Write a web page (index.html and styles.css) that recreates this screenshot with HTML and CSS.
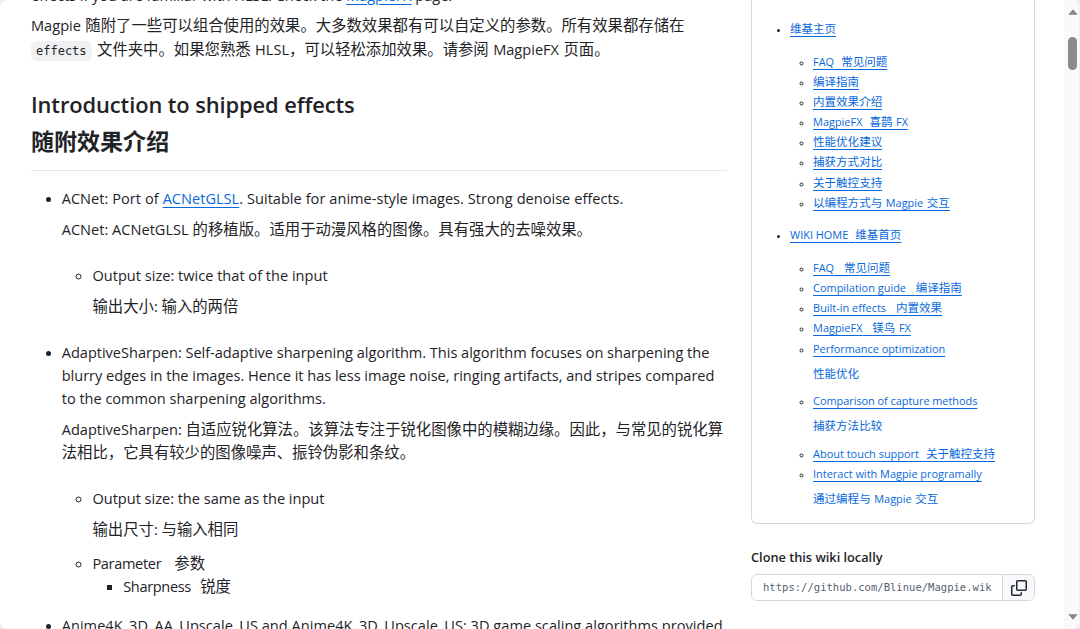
FILE: index.html
```html
<!DOCTYPE html>
<html lang="zh-CN">
<head>
    <meta charset="UTF-8">
    <meta name="viewport" content="width=device-width, initial-scale=1.0">
    <title>Magpie Wiki</title>
    <link rel="stylesheet" href="styles.css">
</head>
<body>
    <div class="page">
        <main class="wiki-body">
            <p>
                <span class="source intro" lang="en">effects if you are familiar with HLSL. Check the <a href="#">MagpieFX</a> page.</span>
                <span class="translation"><span lang="en">Magpie</span> 随附了一些可以组合使用的效果。大多数效果都有可以自定义的参数。所有效果都存储在<br><code>effects</code> 文件夹中。如果您熟悉 <span lang="en">HLSL</span>，可以轻松添加效果。请参阅 <span lang="en">MagpieFX</span> 页面。</span>
            </p>

            <h2>
                <span class="source" lang="en">Introduction to shipped effects</span>
                <span class="translation">随附效果介绍</span>
            </h2>

            <ul>
                <li>
                    <span class="source acnet" lang="en">ACNet: Port of <a href="#">ACNetGLSL</a>. Suitable for anime-style images. Strong denoise effects.</span>
                    <span class="translation"><span lang="en">ACNet: ACNetGLSL</span> 的移植版。适用于动漫风格的图像。具有强大的去噪效果。</span>
                    <ul class="spaced">
                        <li>
                            <span class="source" lang="en">Output size: twice that of the input</span>
                            <span class="translation">输出大小<span lang="en">: </span>输入的两倍</span>
                        </li>
                    </ul>
                </li>
                <li class="spaced">
                    <span class="source sharpen" lang="en">AdaptiveSharpen: Self-adaptive sharpening algorithm. This algorithm focuses on sharpening the<br>blurry edges in the images. Hence it has less image noise, ringing artifacts, and stripes compared<br>to the common sharpening algorithms.</span>
                    <span class="translation"><span class="sharpen" lang="en">AdaptiveSharpen: </span>自适应锐化算法。该算法专注于锐化图像中的模糊边缘。因此，与常见的锐化算<br>法相比，它具有较少的图像噪声、振铃伪影和条纹。</span>
                    <ul class="spaced">
                        <li>
                            <span class="source sharpen" lang="en">Output size: the same as the input</span>
                            <span class="translation">输出尺寸<span lang="en">: </span>与输入相同</span>
                        </li>
                        <li>
                            <span class="param" lang="en">Parameter</span><span class="gap-wide"></span>参数
                            <ul>
                                <li><span class="param" lang="en">Sharpness</span><span class="gap"></span>锐度</li>
                            </ul>
                        </li>
                    </ul>
                </li>
                <li class="spaced">
                    <span class="anime" lang="en">Anime4K_3D_AA_Upscale_US and Anime4K_3D_Upscale_US: 3D game scaling algorithms provided</span>
                </li>
            </ul>
        </main>

        <aside class="sidebar">
            <nav class="wiki-nav">
                <ul>
                    <li>
                        <a href="#">维基主页</a>
                        <ul>
                            <li><a href="#"><span lang="en">FAQ</span><span class="gap">&nbsp;</span>常见问题</a></li>
                            <li><a href="#">编译指南</a></li>
                            <li><a href="#">内置效果介绍</a></li>
                            <li><a href="#"><span lang="en">MagpieFX</span><span class="gap">&nbsp;</span>喜鹊 <span lang="en">FX</span></a></li>
                            <li><a href="#">性能优化建议</a></li>
                            <li><a href="#">捕获方式对比</a></li>
                            <li><a href="#">关于触控支持</a></li>
                            <li><a href="#">以编程方式与 <span lang="en">Magpie</span> 交互</a></li>
                        </ul>
                    </li>
                    <li>
                        <a href="#"><span lang="en">WIKI HOME</span><span class="gap">&nbsp;</span>维基首页</a>
                        <ul>
                            <li><a href="#"><span lang="en">FAQ</span><span class="gap-wide">&nbsp;</span>常见问题</a></li>
                            <li><a href="#"><span lang="en">Compilation guide</span><span class="gap-wide">&nbsp;</span>编译指南</a></li>
                            <li><a href="#"><span lang="en">Built-in effects</span><span class="gap-wide">&nbsp;</span>内置效果</a></li>
                            <li><a href="#"><span lang="en">MagpieFX</span><span class="gap-wide">&nbsp;</span>镁鸟 <span lang="en">FX</span></a></li>
                            <li>
                                <a href="#"><span class="tight" lang="en">Performance optimization</span></a>
                                <a class="nav-translation" href="#">性能优化</a>
                            </li>
                            <li>
                                <a href="#"><span class="tight" lang="en">Comparison of capture methods</span></a>
                                <a class="nav-translation" href="#">捕获方法比较</a>
                            </li>
                            <li><a href="#"><span lang="en">About touch support</span><span class="gap">&nbsp;</span>关于触控支持</a></li>
                            <li>
                                <a href="#"><span lang="en">Interact with Magpie programally</span></a>
                                <a class="nav-translation last" href="#">通过编程与 <span lang="en">Magpie</span> 交互</a>
                            </li>
                        </ul>
                    </li>
                </ul>
            </nav>

            <h5 lang="en">Clone this wiki locally</h5>
            <div class="clone">
                <div class="clone-url">https://github.com/Blinue/Magpie.wik</div>
                <button class="clone-copy" aria-label="Copy">
                    <svg width="16" height="16" viewBox="0 0 16 16" fill="currentColor">
                        <path d="M0 6.75C0 5.784.784 5 1.75 5h1.5a.75.75 0 0 1 0 1.5h-1.5a.25.25 0 0 0-.25.25v7.5c0 .138.112.25.25.25h7.5a.25.25 0 0 0 .25-.25v-1.5a.75.75 0 0 1 1.5 0v1.5A1.75 1.75 0 0 1 9.25 16h-7.5A1.75 1.75 0 0 1 0 14.25Z"/>
                        <path d="M5 1.75C5 .784 5.784 0 6.75 0h7.5C15.216 0 16 .784 16 1.75v7.5A1.75 1.75 0 0 1 14.25 11h-7.5A1.75 1.75 0 0 1 5 9.25Zm1.75-.25a.25.25 0 0 0-.25.25v7.5c0 .138.112.25.25.25h7.5a.25.25 0 0 0 .25-.25v-7.5a.25.25 0 0 0-.25-.25Z"/>
                    </svg>
                </button>
            </div>
        </aside>

        <div class="scrollbar">
            <svg width="10" height="6" viewBox="0 0 10 6"><path d="M5 0.3 9.8 5.7H.2Z"/></svg>
            <div class="thumb"></div>
            <svg width="10" height="6" viewBox="0 0 10 6"><path d="M5 5.7 9.8.3H.2Z"/></svg>
        </div>
    </div>
</body>
</html>
```
FILE: styles.css
```css
* {
    box-sizing: border-box;
}

html {
    font-size: 15.36px;
}

body {
    margin: 0;
    height: 629px;
    overflow: hidden;
    background: #efefef;
    color: #1f2328;
    font-family: "Noto Sans CJK SC", sans-serif;
    line-height: 1.5;
    word-spacing: 1px;
}

:lang(en) {
    font-family: "Open Sans", "Noto Sans", sans-serif;
    word-spacing: 0;
}

/* latin runs sit inside CJK lines without stretching them */
span:lang(en) {
    font-size: 0.95em;
    line-height: 1;
}

ul {
    margin: 0;
    padding-left: 2em;
}

li::marker {
    font-family: "Open Sans", sans-serif;
    font-size: 0.85em;
}

a {
    color: #0969da;
    text-decoration: underline;
    text-underline-offset: 3px;
}

.page {
    display: flex;
    height: 629px;
    overflow: hidden;
    background: #fff;
    border-right: 1px solid #f0f0f0;
    border-radius: 8px;
}

/* main column */

.wiki-body {
    flex: none;
    width: 696px;
    margin: -16.4px 24px 0 31px;
    white-space: nowrap;
}

.wiki-body p {
    margin: 0 0 22.5px;
}

.wiki-body .source,
.wiki-body .translation {
    display: block;
    line-height: 23.04px;
}

.wiki-body .translation {
    padding: 6.8px 0 8.56px;
}

.wiki-body li {
    line-height: 23.04px;
}

.wiki-body li + li {
    margin-top: 3px;
}

.wiki-body .spaced,
.wiki-body li + li.spaced {
    margin-top: 15.36px;
}

.wiki-body .intro {
    letter-spacing: -0.04px;
}

.wiki-body .acnet {
    word-spacing: 0.2px;
}

.wiki-body .acnet + .translation {
    word-spacing: 0.5px;
}

.wiki-body .sharpen {
    letter-spacing: -0.025px;
}

.wiki-body .param {
    letter-spacing: -0.35px;
}

.wiki-body .anime {
    letter-spacing: 0.02px;
}

h2 {
    margin: 0 0 16px;
    padding-bottom: 6.7px;
    border-bottom: 1px solid #e6e9ec;
    font-size: 1.5em;
    font-weight: 600;
}

.wiki-body h2 .source,
.wiki-body h2 .translation {
    line-height: 28.8px;
}

h2 .source {
    letter-spacing: -0.1px;
}

h2 .translation {
    font-weight: 700;
}

code {
    margin-right: 1px;
    padding: 3px 5px;
    border-radius: 6px;
    background: #eff1f3;
    font-family: "DejaVu Sans Mono", monospace;
    font-size: 12px;
    line-height: 1;
}

.gap,
.gap-wide {
    display: inline-block;
    width: 0.6em;
    line-height: 1;
}

.gap-wide {
    width: 0.85em;
}

/* sidebar */

.sidebar {
    flex: none;
    width: 284px;
}

.wiki-nav {
    padding: 20px 15px 15.6px;
    border: 1px solid #d1d9e0;
    border-top: 0;
    border-radius: 0 0 6px 6px;
    font-size: 11.52px;
    line-height: 17.28px;
    white-space: nowrap;
}

.wiki-nav a {
    text-decoration-skip-ink: none;
}

.wiki-nav .gap,
.wiki-nav .gap-wide {
    display: inline;
    letter-spacing: 3.4px;
}

.wiki-nav .gap-wide {
    letter-spacing: 6.2px;
}

.wiki-nav .tight {
    letter-spacing: -0.04px;
}

.wiki-nav ul ul {
    margin: 15.36px 0;
}

.wiki-nav > ul > li:last-child > ul {
    margin-bottom: 0;
}

.wiki-nav li li + li {
    margin-top: 2.88px;
}

.wiki-nav .nav-translation {
    display: block;
    padding: 7.68px 0;
    text-decoration: none;
}

.wiki-nav .nav-translation.last {
    padding-bottom: 0;
}

h5 {
    margin: 23.3px 0 7px;
    font-size: 12.75px;
    font-weight: 600;
    line-height: 20px;
}

.clone {
    display: flex;
    height: 27px;
    border: 1px solid #d1d9e0;
    border-radius: 6px;
    overflow: hidden;
}

.clone-url {
    flex: 1;
    padding-left: 11px;
    color: #59636e;
    font-family: "DejaVu Sans Mono", monospace;
    font-size: 10.56px;
    line-height: 25px;
    white-space: nowrap;
}

.clone-copy {
    display: flex;
    align-items: center;
    justify-content: center;
    width: 32px;
    padding: 0;
    border: 0;
    border-left: 1px solid #d1d9e0;
    background: #f6f8fa;
    color: #25292e;
}

/* scrollbar */

.scrollbar {
    display: flex;
    flex-direction: column;
    align-items: center;
    width: 15px;
    margin-left: auto;
    padding: 9px 0 9px 2px;
    background: #fafafa;
    fill: #858585;
}

.thumb {
    width: 9px;
    height: 33px;
    margin: 22px 0 auto;
    border-radius: 5px;
    background: #8b8b8b;
}
```
